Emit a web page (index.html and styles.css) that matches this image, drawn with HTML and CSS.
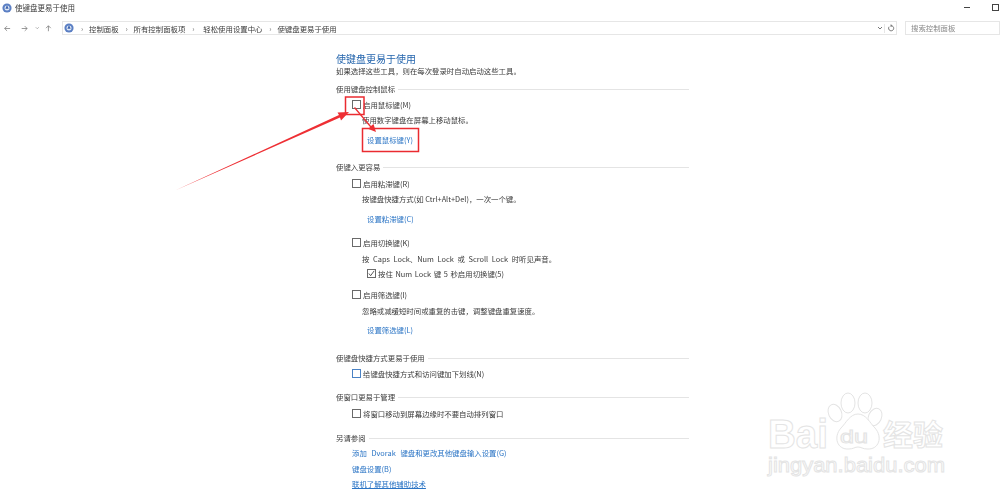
FILE: index.html
```html
<!DOCTYPE html>
<html lang="zh-CN">
<head>
    <meta charset="UTF-8">
    <title>使键盘更易于使用</title>
    <link rel="stylesheet" href="styles.css">
</head>
<body>
    <div class="titlebar">
        <svg class="cp-icon" viewBox="0 0 12 12"><circle cx="6" cy="6" r="5.5" fill="#5b7fc4"/><circle cx="6" cy="6" r="3" fill="#dfe8f5"/><path d="M6 2.5 L8 7 L4 7 Z" fill="#3d63ad"/></svg>
        <span class="title-text">使键盘更易于使用</span>
        <div class="win-btns">
            <span class="win-min"></span>
            <span class="win-max"></span>
        </div>
    </div>
    <div class="navbar">
        <div class="nav-btns">
            <svg class="nav-arrow" viewBox="0 0 10 10"><path d="M9 5H1M4.500 1.500L1 5l3.500 3.500" fill="none" stroke="#6a6a6a"/></svg>
            <svg class="nav-arrow nav-fwd" viewBox="0 0 10 10"><path d="M1 5h8M5.500 1.500L9 5 5.500 8.500" fill="none" stroke="#6a6a6a"/></svg>
            <svg class="nav-chev" viewBox="0 0 6 6"><path d="M1 2l2 2 2-2" fill="none" stroke="#999"/></svg>
            <svg class="nav-arrow" viewBox="0 0 10 10"><path d="M5 9V1M1.500 4.500L5 1l3.500 3.500" fill="none" stroke="#6a6a6a"/></svg>
        </div>
        <div class="addr">
            <svg class="cp-icon" viewBox="0 0 12 12"><circle cx="6" cy="6" r="5.5" fill="#5b7fc4"/><circle cx="6" cy="6" r="3" fill="#dfe8f5"/><path d="M6 2.5 L8 7 L4 7 Z" fill="#3d63ad"/></svg>
            <span class="crumb-sep">›</span><span>控制面板</span>
            <span class="crumb-sep">›</span><span>所有控制面板项</span>
            <span class="crumb-sep crumb-sep-wide">›</span><span>轻松使用设置中心</span>
            <span class="crumb-sep">›</span><span>使键盘更易于使用</span>
            <svg class="addr-chev" viewBox="0 0 6 6"><path d="M1 2l2 2 2-2" fill="none" stroke="#777"/></svg>
            <svg class="addr-refresh" viewBox="0 0 10 10"><path d="M5 1.500A3.200 3.200 0 1 1 2.600 2.800M5 0v3" fill="none" stroke="#555"/></svg>
        </div>
        <div class="search">搜索控制面板</div>
    </div>

    <div class="content">
        <h1>使键盘更易于使用</h1>
        <p class="sub">如果选择这些工具，则在每次登录时自动启动这些工具。</p>

        <div class="group group-1">使用键盘控制鼠标</div>
        <label class="check check-tight"><span class="box"></span>启用鼠标键(M)</label>
        <p class="desc">使用数字键盘在屏幕上移动鼠标。</p>
        <a class="set-link">设置鼠标键(Y)</a>

        <div class="group group-2">使键入更容易</div>
        <label class="check"><span class="box"></span>启用粘滞键(R)</label>
        <p class="desc">按键盘快捷方式(如 Ctrl+Alt+Del)，一次一个键。</p>
        <a class="set-link">设置粘滞键(C)</a>

        <label class="check check-gap"><span class="box"></span>启用切换键(K)</label>
        <p class="desc desc-low desc-wide">按 Caps Lock、Num Lock 或 Scroll Lock 时听见声音。</p>
        <label class="check check-sub"><span class="box box-on"><svg viewBox="0 0 8 8"><path d="M1 4l2 2.500L7 1" fill="none" stroke="#444"/></svg></span>按住 Num Lock 键 5 秒启用切换键(5)</label>

        <label class="check check-gap2"><span class="box"></span>启用筛选键(I)</label>
        <p class="desc desc-low">忽略或减缓短时间或重复的击键，调整键盘重复速度。</p>
        <a class="set-link set-link-tight">设置筛选键(L)</a>

        <div class="group group-3">使键盘快捷方式更易于使用</div>
        <label class="check check-tight"><span class="box box-blue"></span>给键盘快捷方式和访问键加下划线(N)</label>

        <div class="group group-4">使窗口更易于管理</div>
        <label class="check"><span class="box"></span>将窗口移动到屏幕边缘时不要自动排列窗口</label>

        <div class="group group-5">另请参阅</div>
        <a class="see-link see-wide">添加 Dvorak 键盘和更改其他键盘输入设置(G)</a>
        <a class="see-link">键盘设置(B)</a>
        <a class="see-link see-under">联机了解其他辅助技术</a>
    </div>

    <!-- annotations drawn over the screenshot -->
    <svg class="marks" viewBox="0 0 1000 500">
        <rect x="345.500" y="97" width="18.500" height="17.500" fill="none" stroke="#ea2b30" stroke-width="1.500"/>
        <rect x="362.500" y="128.500" width="56" height="23" fill="none" stroke="#ea2b30" stroke-width="1.500"/>
        <path d="M175 190.500L339 115 337.500 112.500 349 112 341 120.500 340 117.500Z" fill="#ee2f34"/>
        <path d="M354 108L355 107 371 126 373.500 124 376 132 368.500 129 370 127Z" fill="#ee2f34"/>
    </svg>

    <svg class="watermark" viewBox="0 0 250 120">
        <g fill="#fff" stroke="#e4e4e4" stroke-width="1">
            <ellipse cx="85" cy="33" rx="6.500" ry="9" transform="rotate(-25 85 33)"/>
            <ellipse cx="98" cy="23" rx="7" ry="10"/>
            <ellipse cx="115" cy="23" rx="7" ry="10"/>
            <ellipse cx="125" cy="37" rx="6.500" ry="9" transform="rotate(25 125 37)"/>
            <path d="M108 34c-8 0-12 9-17 14-8 9-4 22 8 21 4 0 6-2 9-2s5 2 9 2c12 1 16-12 8-21-5-5-9-14-17-14z"/>
            <text class="wm-du" x="90" y="63" textLength="28" lengthAdjust="spacingAndGlyphs">du</text>
            <text class="wm-bai" x="18" y="68" textLength="60" lengthAdjust="spacingAndGlyphs">Bai</text>
            <text class="wm-cn" x="133" y="66" textLength="60" lengthAdjust="spacingAndGlyphs">经验</text>
            <text class="wm-url" x="18" y="92" textLength="177" lengthAdjust="spacingAndGlyphs">jingyan.baidu.com</text>
        </g>
    </svg>
</body>
</html>
```

FILE: styles.css
```css
body {
    margin: 0;
    width: 1000px;
    height: 500px;
    overflow: hidden;
    position: relative;
    background: #fff;
    color: #3a3a3a;
    font-family: "Noto Sans CJK SC", "Liberation Sans", sans-serif;
    font-size: 7.4px;
}

.titlebar,
.navbar,
.content {
    filter: blur(0.3px);
}

.titlebar {
    display: flex;
    align-items: center;
    height: 15px;
    padding-left: 2px;
}

.cp-icon {
    width: 10px;
    height: 10px;
    flex: none;
}

.title-text {
    margin-left: 3px;
    font-size: 7.5px;
}

.win-btns {
    margin-left: auto;
    display: flex;
    align-items: center;
    gap: 22px;
}

.win-min {
    width: 6px;
    height: 1px;
    background: #444;
}

.win-max {
    width: 5px;
    height: 5px;
    border: 1px solid #444;
    margin-right: 1px;
}

.navbar {
    display: flex;
    align-items: center;
    height: 14px;
    margin-top: 6px;
}

.nav-btns {
    width: 62px;
    display: flex;
    align-items: center;
    padding-left: 4px;
    box-sizing: border-box;
}

.nav-arrow {
    width: 9px;
    height: 9px;
    margin-right: 10px;
}

.nav-fwd {
    margin-right: 7px;
}

.nav-chev {
    width: 6px;
    height: 6px;
    margin-right: 6px;
}

.addr {
    width: 835px;
    height: 14px;
    box-sizing: border-box;
    border: 1px solid #e6e6e6;
    display: flex;
    align-items: center;
    padding-left: 1px;
}

.crumb-sep {
    width: 8px;
    margin: 0 3px 0 4px;
    text-align: center;
    color: #777;
}

.crumb-sep-wide {
    margin-right: 6px;
}

.addr-chev {
    width: 6px;
    height: 6px;
    margin-left: auto;
    margin-right: 1px;
}

.addr-refresh {
    width: 8px;
    height: 9px;
    padding: 0 1px 0 2px;
    border-left: 1px solid #e6e6e6;
    flex: none;
}

.search {
    width: 95px;
    height: 14px;
    margin-left: 8px;
    box-sizing: border-box;
    border: 1px solid #e6e6e6;
    padding-left: 5px;
    line-height: 12px;
    color: #888;
}

.content {
    width: 353px;
    margin-left: 336px;
    padding-top: 18px;
}

h1 {
    margin: 0;
    height: 12px;
    line-height: 12px;
    font-size: 10px;
    font-weight: normal;
    color: #2465ad;
}

p {
    margin: 0;
}

.sub {
    height: 12px;
    line-height: 12px;
}

.group {
    display: flex;
    align-items: center;
    gap: 3px;
    height: 12px;
    line-height: 12px;
}

.group::after {
    content: "";
    flex: 1;
    height: 1px;
    background: #e4e4e4;
}

.group-1 {
    margin-top: 6px;
}

.group-2 {
    margin-top: 14px;
}

.group-3 {
    margin-top: 15px;
}

.group-4 {
    margin-top: 11px;
}

.group-5 {
    margin-top: 12px;
}

.check {
    display: flex;
    align-items: center;
    gap: 2px;
    height: 14px;
    margin-top: 3px;
    margin-left: 16px;
}

.check-tight {
    margin-top: 2px;
}

.check-gap {
    margin-top: 9px;
}

.check-gap2 {
    margin-top: 7px;
}

.check-sub {
    margin-left: 31px;
    margin-top: 0;
    word-spacing: 1px;
}

.box {
    width: 7px;
    height: 7px;
    margin-top: 1px;
    border: 1px solid #6a6a6a;
    flex: none;
}

.box svg {
    display: block;
    width: 7px;
    height: 7px;
}

.box-blue {
    border-color: #4a82c4;
}

.desc {
    height: 14px;
    line-height: 14px;
    margin-top: 2px;
    margin-left: 26px;
}

.desc-low {
    margin-top: 3px;
}

.desc-wide {
    word-spacing: 2px;
}

.set-link {
    display: block;
    height: 14px;
    line-height: 14px;
    margin-top: 6px;
    margin-left: 31px;
    color: #2a74c5;
}

.set-link-tight {
    margin-top: 5px;
}

.see-link {
    display: block;
    height: 14px;
    line-height: 14px;
    margin-top: 2px;
    margin-left: 16px;
    color: #2a74c5;
    width: max-content;
}

.see-wide {
    word-spacing: 3px;
}

.see-under {
    margin-top: 1px;
    text-decoration: underline;
}

.marks {
    position: absolute;
    left: 0;
    top: 0;
    width: 1000px;
    height: 500px;
}

.watermark {
    position: absolute;
    left: 750px;
    top: 380px;
    width: 250px;
    height: 120px;
}

.wm-bai {
    font: bold 40px "Liberation Sans", sans-serif;
}

.wm-du {
    font: 19px "Liberation Sans", sans-serif;
}

.wm-cn {
    font: bold 29px "Noto Sans CJK SC", sans-serif;
}

.wm-url {
    font: 21px "Liberation Sans", sans-serif;
}
```
